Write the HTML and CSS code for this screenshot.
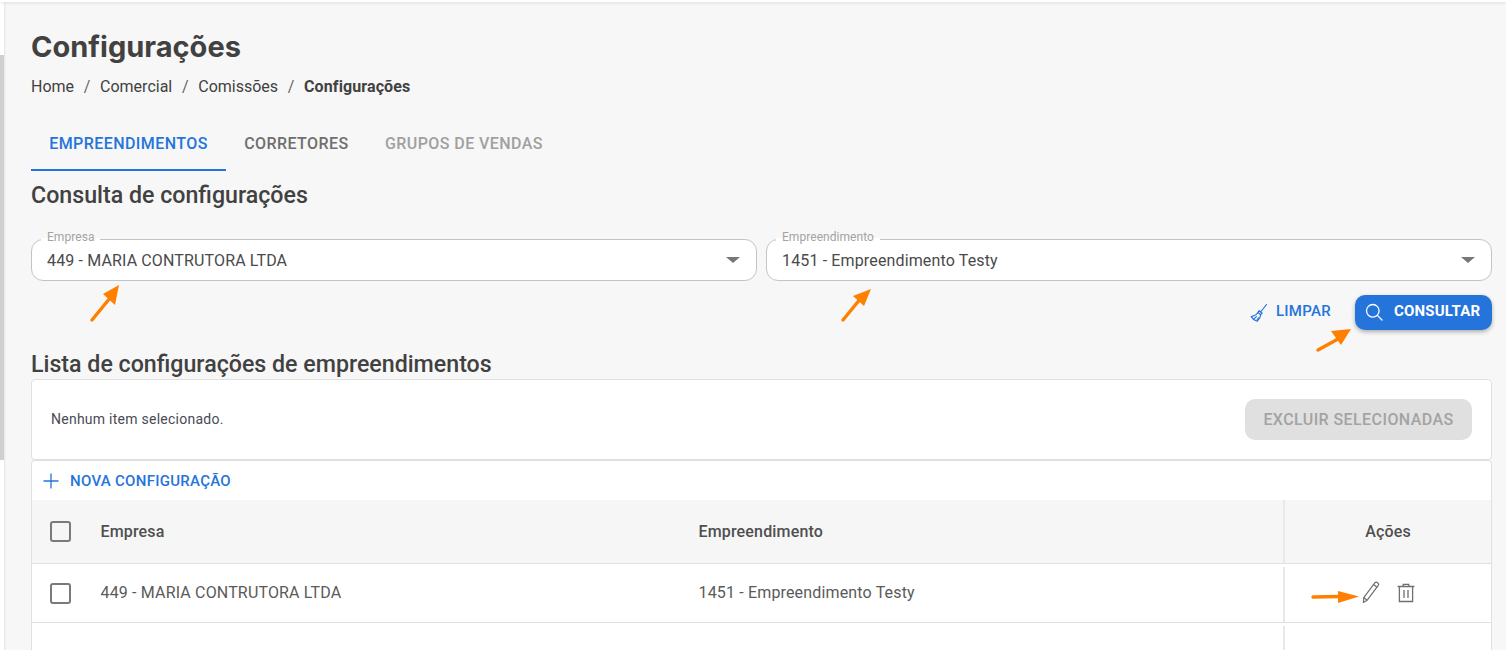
FILE: index.html
```html
<!DOCTYPE html>
<html lang="pt-BR">
<head>
  <meta charset="UTF-8" />
  <title>Configurações</title>
  <link rel="stylesheet" href="styles.css">
</head>
<body>
  <div class="top-bar"></div>
  <div class="shell">
    <div class="side-strip">
      <div class="strip-top"></div>
      <div class="strip-mid"></div>
    </div>
    <main class="content">
      <h1 class="page-title">Configurações</h1>
      <nav class="breadcrumb">
        <a>Home</a><span class="sep">/</span>
        <a>Comercial</a><span class="sep">/</span>
        <a>Comissões</a><span class="sep">/</span>
        <strong>Configurações</strong>
      </nav>

      <div class="tabs">
        <button class="tab active">Empreendimentos</button>
        <button class="tab">Corretores</button>
        <button class="tab disabled">Grupos de vendas</button>
      </div>

      <h2 class="section-title first">Consulta de configurações</h2>

      <div class="filters">
        <div class="field">
          <span class="field-label">Empresa</span>
          <span class="field-value">449 - MARIA CONTRUTORA LTDA</span>
          <span class="caret"></span>
        </div>
        <div class="field">
          <span class="field-label">Empreendimento</span>
          <span class="field-value">1451 - Empreendimento Testy</span>
          <span class="caret"></span>
        </div>
      </div>

      <div class="filter-actions">
        <button class="btn-clear">
          <svg width="20" height="20" viewBox="0 0 20 20" fill="none" stroke="#2574db" stroke-width="1.2" stroke-linejoin="round" stroke-linecap="round">
            <path d="M17.5 1.5 11.6 9"/>
            <path d="M10.2 7.7 13.2 10.1 11.7 11.7 9 9.4Z"/>
            <path d="M9 9.4C8.2 11 5.6 12.6 2.2 13.6 3.2 15.4 5.6 17.4 8.2 18.2 10.2 16.4 11.5 14 11.7 11.7"/>
            <path d="M5.2 15.6 7.4 13.6M8 17 9.6 14.8"/>
          </svg>
          <span class="btn-label">Limpar</span>
        </button>
        <button class="btn-search">
          <svg class="search-icon" width="20" height="20" viewBox="0 0 20 20" fill="none" stroke="#fff" stroke-width="1.3" stroke-linecap="round">
            <circle cx="8.8" cy="8.8" r="6.3"/>
            <path d="M13.4 13.4 18 18"/>
          </svg>
          <span class="btn-label">Consultar</span>
        </button>
      </div>

      <h2 class="section-title">Lista de configurações de empreendimentos</h2>

      <div class="card selection-card">
        <span class="selection-text">Nenhum item selecionado.</span>
        <button class="btn-delete" disabled>Excluir selecionadas</button>
      </div>

      <div class="card table-card">
        <button class="btn-new">
          <svg width="16" height="16" viewBox="0 0 16 16" stroke="#2574db" stroke-width="1.3" fill="none"><path d="M8 .5v15M.5 8h15"/></svg>
          Nova configuração
        </button>
        <div class="grid-row grid-head">
          <div class="cell check-cell"><span class="checkbox"></span></div>
          <div class="cell">Empresa</div>
          <div class="cell">Empreendimento</div>
          <div class="cell actions-cell">Ações</div>
        </div>
        <div class="grid-row">
          <div class="cell check-cell"><span class="checkbox"></span></div>
          <div class="cell text-cell">449 - MARIA CONTRUTORA LTDA</div>
          <div class="cell text-cell">1451 - Empreendimento Testy</div>
          <div class="cell actions-cell row-actions">
            <svg width="20" height="24" viewBox="0 0 20 24" fill="none" stroke="#6f6f6f" stroke-width="1.2" stroke-linejoin="round">
              <path d="M2.8 16.6 13.6 2.2C14.4 1.2 15.6 1 16.6 1.7 17.6 2.4 17.8 3.7 17.1 4.7L6.2 19.2 2.4 21.4Z"/>
              <path d="M12.6 3.6 16 6.2M2.8 16.6 6.2 19.2"/>
            </svg>
            <svg width="18" height="20" viewBox="0 0 18 20" fill="none" stroke="#6f6f6f" stroke-width="1.3">
              <path d="M.6 3.5h16.8M6.2 3.5V1.4h5.6v2.1"/>
              <path d="M2.4 3.5V18.5h13.2V3.5"/>
              <path d="M7 7v8M11 7v8"/>
            </svg>
          </div>
        </div>
        <div class="grid-row empty-row">
          <div class="cell check-cell"></div>
          <div class="cell"></div>
          <div class="cell"></div>
          <div class="cell actions-cell"></div>
        </div>
      </div>
    </main>
  </div>

  <!-- setas de anotacao por cima da tela -->
  <svg class="annotations" width="1506" height="650" viewBox="0 0 1506 650" fill="none">
    <g stroke="#ff8000" stroke-width="3.4" stroke-linecap="round">
      <path d="M92 320 110 298"/>
      <path d="M843 320 861 298"/>
      <path d="M1318 350 1338 339"/>
      <path d="M1313 597 1340 596.5"/>
    </g>
    <g fill="#ff8000">
      <path d="M119 285 115 305 103 294Z"/>
      <path d="M871 289 864 306 853 296Z"/>
      <path d="M1351 329 1341 345 1331 331Z"/>
      <path d="M1359 596.5 1338 591 1338 603Z"/>
    </g>
  </svg>
</body>
</html>
```

FILE: styles.css
```css
:root {
  --bg-color: #f7f7f7;
  --text-color: #414141;
  --blue: #2574db;
  --border-color: #c4c4c4;
  --line-color: #e0e0e0;
}
html, body {
  height: 650px;
  overflow: hidden;
}
body {
  margin: 0;
  font-family: Roboto, sans-serif;
  background-color: var(--bg-color);
  color: var(--text-color);
  position: relative;
}
button {
  font-family: inherit;
  cursor: pointer;
}
.top-bar {
  height: 2px;
  background: #fff;
  box-shadow: 0 1px 3px rgba(0, 0, 0, 0.12);
  position: relative;
}
.shell {
  display: flex;
}
.side-strip {
  width: 4px;
  height: 648px;
  background: #fff;
  box-shadow: 1px 0 2px rgba(0, 0, 0, 0.08);
}
.strip-top {
  height: 53px;
}
.strip-mid {
  height: 405px;
  background: #cfcfcf;
}
.content {
  flex: 1;
  padding: 0 14px 0 27px;
}

/* Titulo */
.page-title {
  margin: 28px 0 0;
  font-family: Inter, sans-serif;
  font-size: 29px;
  line-height: 34px;
  font-weight: 700;
}
.breadcrumb {
  margin-top: 13px;
  font-size: 16px;
  line-height: 20px;
  display: flex;
  align-items: center;
}
.breadcrumb .sep {
  margin: 0 9.7px;
  color: #666;
}
.breadcrumb strong {
  font-weight: 700;
  letter-spacing: 0.1px;
}

/* Tabs */
.tabs {
  display: flex;
  margin-top: 19px;
  height: 55px;
}
.tab {
  padding: 2px 18.2px 0;
  border: none;
  border-bottom: 2px solid transparent;
  background: none;
  font-size: 16px;
  font-weight: 500;
  text-transform: uppercase;
  letter-spacing: 0.43px;
  color: #6f6f6f;
}
.tab.active {
  color: var(--blue);
  border-bottom-color: var(--blue);
}
.tab.disabled {
  color: #a0a0a0;
}
.section-title {
  margin: 0;
  font-size: 23.2px;
  line-height: 26px;
  font-weight: 500;
  padding-top: 21px;
}
.section-title.first {
  padding-top: 11px;
}

/* Filtros */
.filters {
  display: grid;
  grid-template-columns: 726px 726px;
  gap: 9px;
  margin-top: 31px;
}
.field {
  position: relative;
  height: 40px;
  border: 1px solid var(--border-color);
  border-radius: 12px;
  background: #fff;
  display: flex;
  align-items: center;
  justify-content: space-between;
  padding: 0 16px 0 15px;
}
.field-label {
  position: absolute;
  top: -10px;
  left: 9px;
  padding: 0 6px;
  font-size: 12px;
  line-height: 14px;
  letter-spacing: 0.05px;
  color: #a3a3a3;
  background: linear-gradient(var(--bg-color) 55%, #fff 55%);
}
.field-value {
  font-size: 16px;
  letter-spacing: 0.14px;
  color: #4a4a4a;
}
.caret {
  width: 0;
  height: 0;
  border-left: 7px solid transparent;
  border-right: 7px solid transparent;
  border-top: 6px solid #777;
}
.filter-actions {
  display: flex;
  justify-content: flex-end;
  align-items: center;
  gap: 24px;
  margin-top: 14px;
}
.btn-clear, .btn-new {
  display: flex;
  align-items: center;
  border: none;
  background: none;
  color: var(--blue);
  font-weight: 500;
  text-transform: uppercase;
  padding: 0;
}
.btn-clear {
  gap: 7px;
  font-size: 15px;
  letter-spacing: 0.3px;
}
.btn-label {
  padding-bottom: 3px;
}
.btn-search {
  display: flex;
  align-items: center;
  gap: 10px;
  height: 35px;
  width: 137px;
  padding: 0 0 0 9px;
  border: none;
  border-radius: 10px;
  background: var(--blue);
  color: #fff;
  font-size: 15px;
  font-weight: 700;
  text-transform: uppercase;
  letter-spacing: 0.2px;
  box-shadow: 0 2px 4px rgba(0, 0, 0, 0.3);
}
.search-icon {
  margin-bottom: 1px;
}

/* Cards */
.card {
  background: #fff;
  border: 1px solid var(--line-color);
  border-radius: 4px;
}
.selection-card {
  margin-top: 2px;
  height: 79px;
  display: flex;
  align-items: center;
  justify-content: space-between;
  padding: 0 19px;
}
.selection-text {
  font-size: 14px;
  letter-spacing: 0.25px;
  color: #4a4a55;
  padding-bottom: 2px;
}
.btn-delete {
  height: 41px;
  width: 227px;
  border: none;
  border-radius: 10px;
  background: #e0e0e0;
  color: #a3a3a3;
  font-size: 16px;
  font-weight: 500;
  text-transform: uppercase;
  letter-spacing: 0.42px;
  cursor: default;
}
.table-card {
  border-bottom: none;
  border-radius: 4px 4px 0 0;
}
.btn-new {
  height: 39px;
  gap: 11px;
  padding: 1px 0 0 11px;
  font-size: 15px;
  letter-spacing: 0.28px;
}

/* Tabela */
.grid-row {
  display: grid;
  grid-template-columns: 68.5px 598px 584.5px 1fr;
  height: 58px;
  border-bottom: 1px solid var(--line-color);
  font-size: 16px;
  letter-spacing: 0.16px;
  color: #5a5a5a;
}
.grid-head {
  height: 63px;
  background: #f6f6f6;
  font-weight: 500;
  color: #4f4f4f;
}
.empty-row {
  height: 40px;
  border-bottom: none;
}
.cell {
  display: flex;
  align-items: center;
}
.text-cell {
  padding-bottom: 2px;
}
.check-cell {
  padding-left: 18px;
}
.checkbox {
  width: 17px;
  height: 17px;
  border: 2px solid #7a7a7a;
  border-radius: 3px;
}
.actions-cell {
  border-left: 2px solid #e8e8e8;
  justify-content: center;
}
.row-actions {
  gap: 16px;
  margin-top: 3px;
  padding-bottom: 3px;
}
.empty-row .actions-cell {
  margin-top: 3px;
}
.annotations {
  position: absolute;
  top: 0;
  left: 0;
  pointer-events: none;
}
```
